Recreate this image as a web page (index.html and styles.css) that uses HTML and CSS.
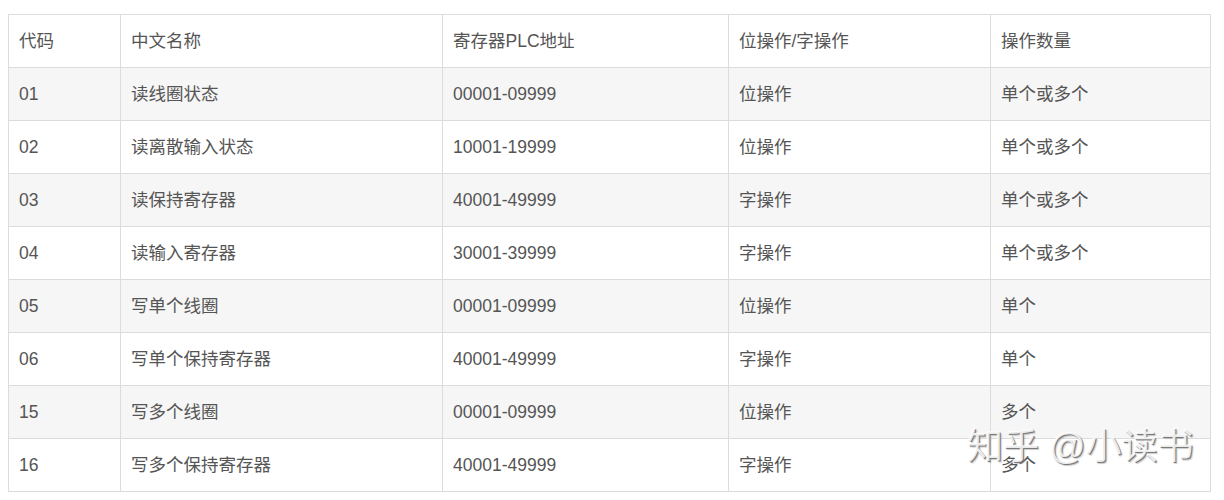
FILE: index.html
```html
<!DOCTYPE html>
<html lang="zh">
<head>
<meta charset="utf-8">
<link rel="stylesheet" href="styles.css">
</head>
<body>
<div class="wrap">
<table class="tbl">
<colgroup>
<col class="c1"><col class="c2"><col class="c3"><col class="c4"><col class="c5">
</colgroup>
<thead>
<tr><th>代码</th><th>中文名称</th><th>寄存器PLC地址</th><th>位操作/字操作</th><th>操作数量</th></tr>
</thead>
<tbody>
<tr><td>01</td><td>读线圈状态</td><td>00001-09999</td><td>位操作</td><td>单个或多个</td></tr>
<tr><td>02</td><td>读离散输入状态</td><td>10001-19999</td><td>位操作</td><td>单个或多个</td></tr>
<tr><td>03</td><td>读保持寄存器</td><td>40001-49999</td><td>字操作</td><td>单个或多个</td></tr>
<tr><td>04</td><td>读输入寄存器</td><td>30001-39999</td><td>字操作</td><td>单个或多个</td></tr>
<tr><td>05</td><td>写单个线圈</td><td>00001-09999</td><td>位操作</td><td>单个</td></tr>
<tr><td>06</td><td>写单个保持寄存器</td><td>40001-49999</td><td>字操作</td><td>单个</td></tr>
<tr><td>15</td><td>写多个线圈</td><td>00001-09999</td><td>位操作</td><td>多个</td></tr>
<tr><td>16</td><td>写多个保持寄存器</td><td>40001-49999</td><td>字操作</td><td>多个</td></tr>
</tbody>
</table>
<div class="watermark">知乎 @小读书</div>
</div>
</body>
</html>
```
FILE: styles.css
```css
html, body {
  margin: 0;
  padding: 0;
  background: #fff;
}
body {
  padding: 14px 8px 0 8px;
  font-family: "Liberation Sans", "Noto Sans CJK SC", sans-serif;
}
.wrap {
  position: relative;
  width: 1202px;
}
.tbl {
  width: 1202px;
  border-collapse: collapse;
  table-layout: fixed;
  color: #555;
  font-size: 17.5px;
  line-height: 20px;
}
.c1 { width: 112px; }
.c2 { width: 322px; }
.c3 { width: 286px; }
.c4 { width: 262px; }
.c5 { width: 220px; }
.tbl th, .tbl td {
  border: 1px solid #dcdcdc;
  height: 53px;
  padding: 0 10px;
  text-align: left;
  font-weight: normal;
  vertical-align: middle;
  box-sizing: border-box;
  white-space: nowrap;
}
.tbl tbody tr:nth-child(odd) td {
  background: #f6f6f6;
}
.watermark {
  position: absolute;
  left: 959px;
  top: 408px;
  font-family: "Liberation Sans", "Noto Sans CJK SC", sans-serif;
  font-size: 36px;
  line-height: 50px;
  color: rgba(255, 255, 255, 0.85);
  text-shadow: 1px 1px 0 rgba(100, 100, 100, 0.8), 2px 2px 1px rgba(140, 140, 140, 0.45);
  white-space: nowrap;
  pointer-events: none;
}
```
